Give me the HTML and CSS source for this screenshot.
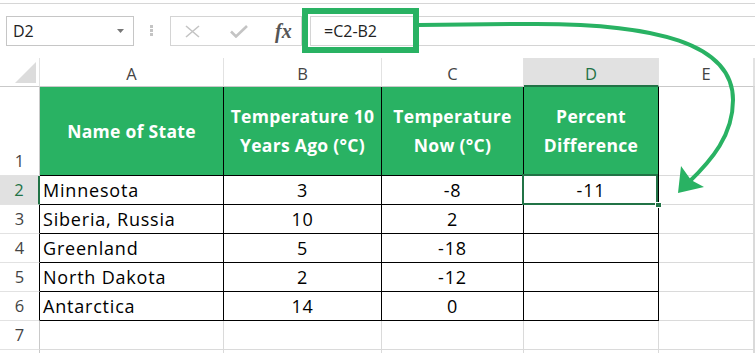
FILE: index.html
```html
<!DOCTYPE html>
<html>
<head>
<meta charset="utf-8">
<link rel="stylesheet" href="styles.css">
</head>
<body>
<div class="ribbon-edge"></div>
<div class="toolbar">
  <div class="namebox"><span>D2</span><svg class="caret" width="7" height="4" viewBox="0 0 7 4"><polygon points="0,0 7,0 3.5,4" fill="#777"/></svg></div>
  <div class="grip"><i></i><i></i><i></i></div>
  <div class="fbtns">
    <svg class="ico-x" width="15" height="13" viewBox="0 0 15 13"><path d="M1 1 L14 12 M14 1 L1 12" stroke="#c4c4c4" stroke-width="1.6" fill="none"/></svg>
    <svg class="ico-ok" width="18" height="13" viewBox="0 0 18 13"><path d="M1 6.5 L6 11.5 L17 1" stroke="#c4c4c4" stroke-width="2.6" fill="none"/></svg>
    <span class="fx"><i>f</i><i>x</i></span>
  </div>
  <div class="formula">=C2-B2</div>
</div>
<div class="sheet">
  <div class="ch corner"><svg width="39" height="28" viewBox="0 0 39 28"><polygon points="15,25 36,25 36,4" fill="#dcdcdc"/></svg></div>
  <div class="ch">A</div><div class="ch">B</div><div class="ch">C</div><div class="ch sel">D</div><div class="ch">E</div><div class="ch"></div>

  <div class="rh bottom">1</div>
  <div class="t th">Name of State</div>
  <div class="t th"><span>Temperature 10</span><span>Years Ago (°C)</span></div>
  <div class="t th"><span>Temperature</span><span>Now (°C)</span></div>
  <div class="t th"><span>Percent</span><span>Difference</span></div>
  <div class="c"></div><div class="c"></div>

  <div class="rh rsel">2</div>
  <div class="t txt">Minnesota</div><div class="t num">3</div><div class="t num">-8</div>
  <div class="t num active">-11<span class="selbox"></span><span class="handle"></span></div>
  <div class="c"></div><div class="c"></div>

  <div class="rh tb">3</div>
  <div class="t txt">Siberia, Russia</div><div class="t num">10</div><div class="t num">2</div><div class="t"></div>
  <div class="c"></div><div class="c"></div>

  <div class="rh tb">4</div>
  <div class="t txt">Greenland</div><div class="t num">5</div><div class="t num">-18</div><div class="t"></div>
  <div class="c"></div><div class="c"></div>

  <div class="rh tb">5</div>
  <div class="t txt">North Dakota</div><div class="t num">2</div><div class="t num">-12</div><div class="t"></div>
  <div class="c"></div><div class="c"></div>

  <div class="rh tb">6</div>
  <div class="t txt">Antarctica</div><div class="t num">14</div><div class="t num">0</div><div class="t"></div>
  <div class="c"></div><div class="c"></div>

  <div class="rh">7</div>
  <div class="c"></div><div class="c"></div><div class="c"></div><div class="c"></div><div class="c"></div><div class="c"></div>

  <div class="rh"></div>
  <div class="c"></div><div class="c"></div><div class="c"></div><div class="c"></div><div class="c"></div><div class="c"></div>
</div>
<svg class="annot" width="755" height="353" viewBox="0 0 755 353">
  <rect x="305" y="11" width="111" height="39" fill="none" stroke="#29b263" stroke-width="6"/>
  <path d="M419 25 L520 24 C660 22 733 45 733 100 C733 135 712 160 688 183" fill="none" stroke="#29b263" stroke-width="4"/>
  <polygon points="678,193 681,166 691,180 704,187" fill="#29b263"/>
</svg>
</body>
</html>
```
FILE: styles.css
```css
* { box-sizing: border-box; margin: 0; padding: 0; }
html, body { width: 755px; height: 353px; overflow: hidden; background: #fff; }
body { font-family: "Open Sans", "Noto Sans", sans-serif; position: relative; color: #000; }

.ribbon-edge { height: 4px; border-bottom: 1px solid #d6d6d6; }

.toolbar { height: 54px; display: flex; align-items: flex-start; padding-top: 12px; }
.namebox { margin-left: 6px; width: 128px; height: 30px; border: 1px solid #c6c6c6; display: flex; align-items: center; justify-content: space-between; padding: 0 9px 0 6px; font-size: 16px; color: #222; }
.caret { display: block; }
.grip { margin-left: 16px; width: 3px; display: flex; flex-direction: column; gap: 1px; padding-top: 9px; }
.grip i { display: block; width: 3px; height: 3px; background: #c4c4c4; }
.fbtns { margin-left: 17px; width: 132px; height: 30px; border: 1px solid #d4d4d4; display: flex; align-items: center; }
.ico-x { margin-left: 14px; display: block; }
.ico-ok { margin-left: 30px; display: block; }
.fx { margin-left: 27px; font-family: "Liberation Serif", serif; font-size: 20px; color: #555; line-height: 20px; font-weight: 700; }
.fx i { font-style: italic; }
.formula { margin-left: 8px; flex: 1; height: 30px; border: 1px solid #d4d4d4; border-right: none; padding-left: 13px; font-size: 16px; line-height: 28px; color: #222; }

.sheet { display: grid; grid-template-columns: 40px 184px 158px 142px 135px 95px 1fr; grid-template-rows: 29px 89px repeat(7, 29px); }
.sheet > div { border-right: 1px solid #dadada; border-bottom: 1px solid #dadada; }

.ch { font-size: 16.5px; color: #444; text-align: center; line-height: 28px; padding-top: 2px; border-right-color: #e2e2e2 !important; border-bottom-color: #c9c9c9 !important; }
.ch.corner { padding-top: 0; }
.ch.corner svg { display: block; }
.ch.sel { background: #e1e1e1; color: #217346; border-bottom: 2px solid #217346 !important; line-height: 27px; }

.rh { font-size: 16.5px; color: #444; text-align: center; line-height: 28px; border-right-color: #c9c9c9 !important; border-bottom-color: #e2e2e2 !important; }
.rh.bottom { display: flex; align-items: flex-end; justify-content: center; }
.rh.tb { border-right-color: #000 !important; }
.rh.rsel { background: #e1e1e1; color: #217346; border-right: 2px solid #217346 !important; }

.t { border-right-color: #000 !important; border-bottom-color: #000 !important; font-size: 18px; letter-spacing: 0.8px; line-height: 28px; }
.txt { padding-left: 3px; }
.num { text-align: center; }
.th { background: #29b263; color: #fff; font-weight: 700; font-size: 17.5px; letter-spacing: 0.3px; line-height: 29px; display: flex; flex-direction: column; align-items: center; justify-content: center; text-align: center; }

.active { position: relative; }
.selbox { position: absolute; left: -2px; top: -2px; right: 0; bottom: -1px; border: 2px solid #217346; }
.handle { position: absolute; left: 131px; top: 26px; width: 7px; height: 6px; background: #217346; border: 1px solid #fff; }

.annot { position: absolute; left: 0; top: 0; pointer-events: none; }
```
